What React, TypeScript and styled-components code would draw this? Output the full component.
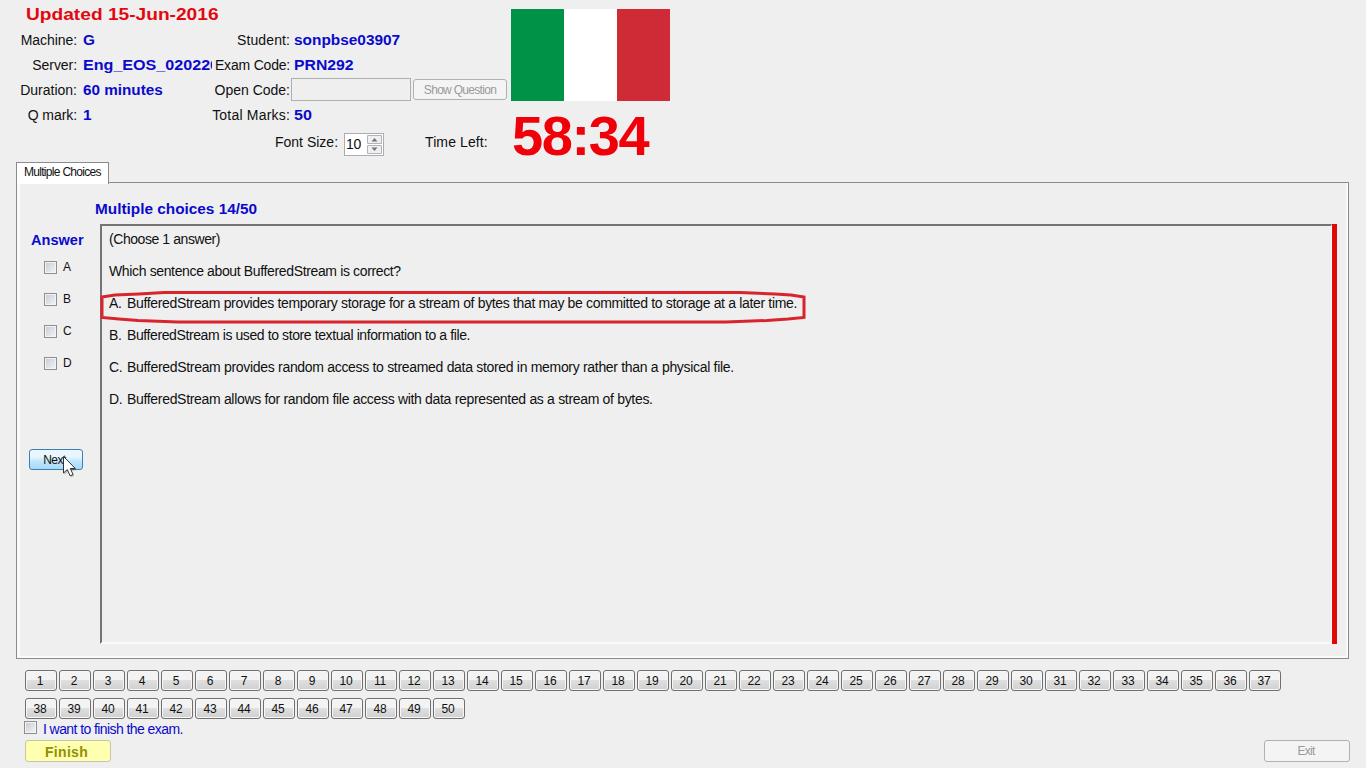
import React from "react";
import styled, { createGlobalStyle } from "styled-components";

const Global = createGlobalStyle`
  * { box-sizing: border-box; }
  body { margin: 0; background: #efefef; overflow: hidden; }
`;

const Page = styled.main`
  width: 1366px;
  height: 768px;
  display: flex;
  flex-direction: column;
  background: #efefef;
  color: #101010;
  font: 14px/16px "Liberation Sans", Arial, sans-serif;
  white-space: nowrap;
`;

const Header = styled.header`
  display: flex;
  height: 162px;
`;

const Info = styled.section`
  width: 511px;
  display: flex;
  flex-direction: column;
`;

const Title = styled.h1`
  margin: 0;
  height: 28px;
  padding-left: 26px;
  font-size: 17px;
  line-height: 30px;
  color: #e10810;
`;

const InfoRow = styled.div`
  display: grid;
  grid-template-columns: 77px 6px 129px 78px 4px 1fr;
  align-items: center;
  height: 25px;
`;

const Label = styled.span<{ $space?: number }>`
  justify-self: end;
  padding-bottom: 2px;
  letter-spacing: ${(p) => p.$space ?? -0.06}px;
`;

const Value = styled.span`
  overflow: hidden;
  padding-bottom: 2px;
  color: #0a0acc;
  font-weight: bold;
`;

const Stretch = styled.span<{ $x: number }>`
  display: inline-block;
  transform: scaleX(${(p) => p.$x});
  transform-origin: left center;
`;

const CodeEntry = styled.div`
  display: flex;
  align-items: center;
  gap: 2px;
  margin: -2px 0 0 -3px;
`;

const CodeInput = styled.input`
  width: 120px;
  height: 23px;
  border: 1px solid #afafaf;
  border-radius: 0;
  background: #efefef;
`;

const Button = styled.button<{ $w: number; $h: number }>`
  width: ${(p) => p.$w}px;
  height: ${(p) => p.$h}px;
  padding: 1px 0 0;
  border: 1px solid #adb2b5;
  border-radius: 3px;
  background: #f4f4f4;
  color: #9a9a9a;
  font: 12px/13px "Liberation Sans", Arial, sans-serif;
  letter-spacing: -0.7px;
`;

const Controls = styled.div`
  display: flex;
  align-items: center;
  height: 34px;
  padding: 0 0 4px 275px;
`;

const Spinner = styled.div`
  display: flex;
  width: 40px;
  height: 23px;
  margin: 3px 41px 0 6px;
  padding: 1px;
  border: 1px solid #a9adb5;
  background: #fff;
  line-height: 18px;
`;

const SpinValue = styled.span`
  flex: 1;
  letter-spacing: -0.4px;
`;

const Arrows = styled.svg`
  width: 15px;
  height: 19px;
`;

const Side = styled.aside`
  padding-top: 9px;
`;

const Flag = styled.div`
  width: 159px;
  height: 92px;
  background: linear-gradient(90deg, #009246 0 53px, #fff 53px 106px, #ce2b37 106px);
`;

const Timer = styled.div`
  height: 60px;
  margin-top: 5px;
  padding-left: 1px;
  color: #f00008;
  font-size: 56px;
  font-weight: bold;
  line-height: 60px;
  letter-spacing: -1.4px;
`;

const Tab = styled.div`
  width: 93px;
  height: 22px;
  margin: 0 0 -2px 16px;
  padding-left: 7px;
  border: 1px solid #8b8b8b;
  border-bottom: 0;
  background: #fff;
  font-size: 12px;
  line-height: 19px;
  letter-spacing: -0.7px;
  z-index: 1;
`;

const Panel = styled.section`
  display: flex;
  width: 1333px;
  height: 477px;
  margin-left: 16px;
  border: 1px solid #8b8b8b;
  box-shadow: inset 3px 0 #fafafa, inset -2px -2px #fafafa;
`;

const Answers = styled.aside`
  width: 78px;
  padding: 49px 0 0 12px;
`;

const BlueHeading = styled.h2`
  margin: 0;
  color: #0a0acc;
  font-size: 14px;
  line-height: 16px;
`;

const AnswerHead = styled(BlueHeading)`
  padding-left: 2px;
`;

const AnswerList = styled.div`
  margin: 3px 0 70px 15px;
`;

const Check = styled.label<{ $h: number }>`
  display: flex;
  align-items: center;
  gap: 6px;
  height: ${(p) => p.$h}px;
  font-size: 12px;
`;

const Box = styled.span`
  width: 13px;
  height: 13px;
  border: 1px solid #8e8f8f;
  background: linear-gradient(135deg, #c5cad0, #f6f6f6);
  box-shadow: inset 0 0 0 1px #f4f4f4;
`;

const NextButton = styled(Button)`
  position: relative;
  display: block;
  padding-right: 3px;
  border-color: #3c7fb1;
  background: linear-gradient(#eaf6fd 0 35%, #bee6fd 60%, #a7d9f5);
  color: #101010;
  letter-spacing: -0.5px;
`;

const Pointer = styled.svg`
  position: absolute;
  left: 32px;
  top: 5px;
  width: 16px;
  height: 23px;
`;

const Content = styled.div`
  width: 1242px;
  padding-top: 18px;
`;

const QuestionRow = styled.div`
  display: flex;
  height: 420px;
  margin: 7px 0 0 5px;
`;

const Question = styled.article`
  position: relative;
  width: 1232px;
  padding: 5px 0 0 7px;
  border: solid;
  border-width: 2px 1px 2px 2px;
  border-color: #747474 #fafafa #fafafa #747474;
`;

const Line = styled.p<{ $space: number }>`
  margin: 0 0 16px;
  letter-spacing: ${(p) => p.$space}px;
`;

const Letter = styled.span`
  display: inline-block;
  width: 18px;
`;

const Mark = styled.svg`
  position: absolute;
  left: -3px;
  top: 64px;
  width: 710px;
  height: 36px;
`;

const RedBar = styled.div`
  width: 5px;
  height: 420px;
  background: #e00808;
`;

const Numbers = styled.nav`
  display: flex;
  flex-wrap: wrap;
  gap: 7px 2px;
  width: 1260px;
  margin: 11px 0 0 25px;
`;

const NumberButton = styled(Button)`
  padding-right: 2px;
  border-color: #707070;
  background: linear-gradient(#f3f3f3 0 45%, #dfdfdf 50%, #d0d0d0);
  box-shadow: inset 0 0 0 1px #f7f7f7;
  color: #101010;
  letter-spacing: -0.2px;
`;

const Confirm = styled(Check)`
  align-items: flex-start;
  padding-top: 1px;
  margin: 1px 0 0 24px;
  color: #0a0acc;
  font-size: 14px;
  line-height: 16px;
  letter-spacing: -0.58px;
`;

const Footer = styled.footer`
  display: flex;
  justify-content: space-between;
  padding: 2px 16px 0 25px;
`;

const ExitButton = styled(Button)`
  padding-right: 2px;
`;

const FinishButton = styled(Button)`
  padding: 2px 3px 0 0;
  border-color: #c6c6b0;
  background: #ffffb0;
  color: #909000;
  font-size: 14px;
  font-weight: bold;
  letter-spacing: 0.3px;
`;

const options: [string, string, number][] = [
  ["A.", "BufferedStream provides temporary storage for a stream of bytes that may be committed to storage at a later time.", -0.335],
  ["B.", "BufferedStream is used to store textual information to a file.", -0.4],
  ["C.", "BufferedStream provides random access to streamed data stored in memory rather than a physical file.", -0.31],
  ["D.", "BufferedStream allows for random file access with data represented as a stream of bytes.", -0.32],
];

export default function App() {
  return (
    <Page>
      <Global />
      <Header>
        <Info>
          <Title><Stretch $x={1.126}>Updated 15-Jun-2016</Stretch></Title>
          <InfoRow>
            <Label>Machine:</Label><i /><Value><Stretch $x={1.1}>G</Stretch></Value>
            <Label $space={0.1}>Student:</Label><i /><Value><Stretch $x={1.1}>sonpbse03907</Stretch></Value>
          </InfoRow>
          <InfoRow>
            <Label>Server:</Label><i /><Value><Stretch $x={1.15}>Eng_EOS_020220</Stretch></Value>
            <Label $space={-0.2}>Exam Code:</Label><i /><Value><Stretch $x={1.125}>PRN292</Stretch></Value>
          </InfoRow>
          <InfoRow>
            <Label $space={0}>Duration:</Label><i /><Value><Stretch $x={1.09}>60 minutes</Stretch></Value>
            <Label $space={0}>Open Code:</Label><i />
            <CodeEntry>
              <CodeInput disabled />
              <Button $w={94} $h={21} disabled>Show Question</Button>
            </CodeEntry>
          </InfoRow>
          <InfoRow>
            <Label>Q mark:</Label><i /><Value><Stretch $x={1.1}>1</Stretch></Value>
            <Label $space={0.2}>Total Marks:</Label><i /><Value><Stretch $x={1.15}>50</Stretch></Value>
          </InfoRow>
          <Controls>
            <Label $space={0}>Font Size:</Label>
            <Spinner>
              <SpinValue>10</SpinValue>
              <Arrows viewBox="0 0 15 19">
                <path d="M.5 .5h14v8h-14zM.5 10.5h14v8h-14z" fill="#efefef" stroke="#b4b4b8" />
                <path d="M4.5 6.5h6l-3-3.5zM4.5 12.5h6l-3 3.5z" fill="#73737b" />
              </Arrows>
            </Spinner>
            <Label $space={0.1}>Time Left:</Label>
          </Controls>
        </Info>
        <Side>
          <Flag />
          <Timer>58:34</Timer>
        </Side>
      </Header>
      <Tab>Multiple Choices</Tab>
      <Panel>
        <Answers>
          <AnswerHead><Stretch $x={1.04}>Answer</Stretch></AnswerHead>
          <AnswerList>
            {["A", "B", "C", "D"].map((l) => (
              <Check $h={32} key={l}><Box />{l}</Check>
            ))}
          </AnswerList>
          <NextButton $w={54} $h={21}>
            Next
            <Pointer viewBox="0 0 16 23">
              <path d="M2.5 3v17l3.9-3.4 2.7 6 3-1.3-2.7-5.8h5.2z" fill="#000" opacity=".2" />
              <path d="M1.5 1.5v16.5l3.8-3.4 2.8 6.2 3-1.3-2.8-6h5z" fill="#fff" stroke="#333" />
            </Pointer>
          </NextButton>
        </Answers>
        <Content>
          <BlueHeading><Stretch $x={1.096}>Multiple choices 14/50</Stretch></BlueHeading>
          <QuestionRow>
            <Question>
              <Line $space={-0.43}>(Choose 1 answer)</Line>
              <Line $space={-0.36}>Which sentence about BufferedStream is correct?</Line>
              {options.map(([l, t, space]) => (
                <Line key={l} $space={space}><Letter>{l}</Letter>{t}</Line>
              ))}
              <Mark viewBox="0 0 710 36">
                <path d="M3 7 16 5 40 4 65 2.500H641L676 4 692 5 705 7V27.500L689 29 668 30.500 627 32H79L39 30.500 20 29 3 27.500Z" fill="none" stroke="#d8242c" strokeWidth="3" />
              </Mark>
            </Question>
            <RedBar />
          </QuestionRow>
        </Content>
      </Panel>
      <Numbers>
        {Array.from({ length: 50 }, (_, i) => (
          <NumberButton $w={32} $h={21} key={i}>{i + 1}</NumberButton>
        ))}
      </Numbers>
      <Confirm $h={18}><Box />I want to finish the exam.</Confirm>
      <Footer>
        <FinishButton $w={86} $h={22}>Finish</FinishButton>
        <ExitButton $w={86} $h={22} disabled>Exit</ExitButton>
      </Footer>
    </Page>
  );
}
